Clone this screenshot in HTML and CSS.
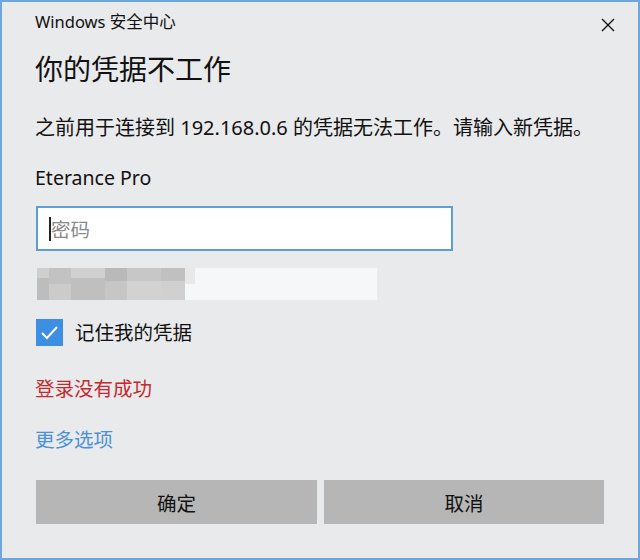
FILE: index.html
```html
<!DOCTYPE html>
<html lang="zh-CN">
  <head>
    <meta charset="UTF-8" />
    <meta name="viewport" content="width=device-width, initial-scale=1.0" />
    <title>Windows 安全中心</title>
    <link rel="stylesheet" href="styles.css">
  </head>
  <body>
    <div class="dialog">
      <header class="titlebar">
        <span class="app-name">Windows 安全中心</span>
        <button class="close" aria-label="关闭">
          <svg width="14" height="14" viewBox="0 0 14 14">
            <path d="M1 1 L13 13 M13 1 L1 13" stroke="#111" stroke-width="1.4" fill="none" />
          </svg>
        </button>
      </header>

      <h1 class="heading">你的凭据不工作</h1>
      <p class="message">之前用于连接到 192.168.0.6 的凭据无法工作。请输入新凭据。</p>
      <div class="user">Eterance Pro</div>

      <div class="password">
        <span class="caret"></span>
        <span class="placeholder">密码</span>
      </div>

      <div class="blurred">
        <span class="px a"></span>
        <span class="px b"></span>
        <span class="px c"></span>
        <span class="px d"></span>
        <span class="px e"></span>
        <span class="px f"></span>
        <span class="px g"></span>
      </div>

      <label class="remember">
        <span class="check">
          <svg width="27" height="27" viewBox="0 0 27 27">
            <path d="M6 14 L11 19 L21 8" stroke="#fff" stroke-width="2" fill="none" />
          </svg>
        </span>
        <span>记住我的凭据</span>
      </label>

      <div class="error">登录没有成功</div>
      <a class="more" href="#">更多选项</a>

      <div class="actions">
        <button class="btn">确定</button>
        <button class="btn">取消</button>
      </div>
    </div>
  </body>
</html>
```

FILE: styles.css
```css
* {
  box-sizing: border-box;
}

body {
  margin: 0;
  background-color: #e9eaec;
  font-family: "Noto Sans", "Noto Sans CJK SC", sans-serif;
  color: #111;
}

.dialog {
  width: 640px;
  height: 560px;
  border: 2px solid #6fa7dc;
  background-color: #e9eaec;
  padding: 8px 34px 0 33px;
  display: flex;
  flex-direction: column;
  align-items: flex-start;
}

.titlebar {
  width: 100%;
  display: flex;
  justify-content: space-between;
  align-items: center;
  height: 24px;
}

.app-name {
  font-size: 16.5px;
  line-height: 24px;
}

.close {
  border: none;
  background: none;
  padding: 0;
  margin-right: -11px;
  margin-top: 5px;
  display: flex;
}

.heading {
  margin: 17px 0 0;
  font-size: 28px;
  font-weight: normal;
  line-height: 36px;
}

.message {
  margin: 27px 0 0;
  font-size: 20px;
  line-height: 28px;
}

.user {
  margin-top: 22px;
  font-size: 19.5px;
  line-height: 28px;
}

.password {
  margin-top: 14px;
  margin-left: 1px;
  width: 417px;
  height: 45px;
  border: 2px solid #5b9fd6;
  background-color: #fff;
  display: flex;
  align-items: center;
  padding-left: 11px;
}

.caret {
  width: 2px;
  height: 24px;
  background-color: #222;
}

.placeholder {
  font-size: 19.5px;
  color: #8a8a8a;
}

.blurred {
  margin-top: 17px;
  margin-left: 2px;
  width: 340px;
  height: 32px;
  display: flex;
  background-color: #f6f7f8;
}

.px {
  height: 100%;
}

.px.a { width: 12px; background: linear-gradient(#cfcfcf 0 30%, #bdbdbd 30% 100%); }
.px.b { width: 22px; background: linear-gradient(#c2c2c2 0 50%, #cbcbcb 50% 100%); }
.px.c { width: 34px; background: linear-gradient(#d0d0d0 0 30%, #bfbfbf 30% 100%); }
.px.d { width: 22px; background: linear-gradient(#b9b9b9 0 40%, #c6c6c6 40% 100%); }
.px.e { width: 34px; background: linear-gradient(#c7c7c7 0 40%, #d2d2d2 40% 100%); }
.px.f { width: 24px; background: linear-gradient(#c0c0c0 0 40%, #d0d0d0 40% 100%); }
.px.g { width: 10px; background: linear-gradient(#e8e8e8 0 50%, #f6f7f8 50% 100%); }

.remember {
  margin-top: 19px;
  margin-left: 1px;
  display: flex;
  align-items: center;
  gap: 12px;
  font-size: 19.5px;
  line-height: 27px;
}

.check {
  width: 27px;
  height: 27px;
  background-color: #3d8fe3;
  display: flex;
}

.error {
  margin-top: 29px;
  font-size: 19.5px;
  line-height: 28px;
  color: #c3292e;
}

.more {
  margin-top: 23px;
  font-size: 19.5px;
  line-height: 28px;
  color: #4a91d5;
  text-decoration: none;
}

.actions {
  margin-top: 26px;
  margin-left: 1px;
  display: flex;
  gap: 7px;
}

.btn {
  width: 281px;
  height: 44px;
  border: none;
  background-color: #b6b6b6;
  font-family: inherit;
  font-size: 19.5px;
  color: #111;
}

.btn + .btn {
  width: 280px;
}
```
